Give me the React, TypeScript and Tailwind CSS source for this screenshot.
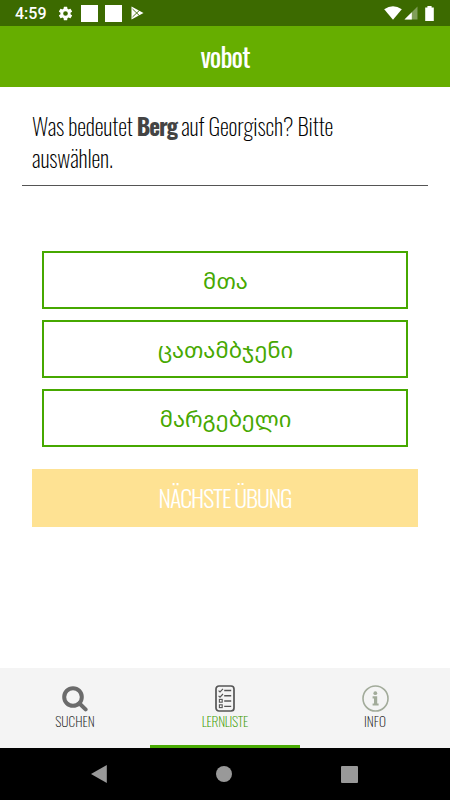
import { IoSettingsSharp } from "react-icons/io5";
import type { ReactNode } from "react";

const answers = ["მთა", "ცათამბჯენი", "მარგებელი"];

function StatusBar() {
  return (
    <div className="flex h-[26px] items-center bg-[#3c6a00] pl-[15px] pr-4 text-white">
      <span className="w-[42px] font-['Roboto',sans-serif] text-[16px] font-medium leading-[26px] pt-0.5">
        4:59
      </span>
      <IoSettingsSharp className="ml-[1px] size-[15px]" />
      <span className="ml-2 size-[17px] bg-white" />
      <span className="ml-[7px] size-[17px] bg-white" />
      <svg className="ml-[9px] h-[14px] w-[13px]" viewBox="0 0 13 14">
        <path d="M0.5 0.5 L12.5 7 L0.5 13.5 Z" fill="#fff" />
        <path d="M1.5 3 L8.8 10 M1.5 11 L8.8 4" stroke="#3c6a00" strokeWidth="0.9" />
      </svg>
      <div className="ml-auto flex items-center">
        <svg className="h-[14px] w-[18px]" viewBox="0 0 18 14">
          <path d="M0.2 3.3 Q9 -3 17.8 3.3 L9 13.8 Z" fill="#fff" />
        </svg>
        <svg className="ml-[2px] h-[14px] w-[14px]" viewBox="0 0 14 14">
          <path d="M13.5 0.5 V13.5 H0.5 Z" fill="#fff" opacity="0.35" />
          <path d="M7.8 6.2 V13.5 H0.5 Z" fill="#fff" />
        </svg>
        <svg className="ml-[7px] h-[15px] w-[9px]" viewBox="0 0 9 15">
          <path d="M0.2 1.4 H2.4 V0 H6.6 V1.4 H8.8 V15 H0.2 Z" fill="#fff" />
        </svg>
      </div>
    </div>
  );
}

function SearchIcon() {
  return (
    <svg className="size-[26px]" viewBox="0 0 26 26" fill="none" stroke="#6b6b6b">
      <circle cx="11" cy="11" r="8.8" strokeWidth="4" />
      <path d="M17.5 17.5 L23.6 23.4" strokeWidth="4" strokeLinecap="round" />
    </svg>
  );
}

function ListIcon() {
  return (
    <svg className="h-[27px] w-5" viewBox="0 0 20 27" fill="none" stroke="#555">
      <rect x="1" y="1" width="18" height="25" rx="3" strokeWidth="1.7" />
      <path d="M3.6 5.6 L5 7 L8 3.8 M3.6 10.8 L5 12.2 L8 9" strokeWidth="1.1" />
      <rect x="4.4" y="14.4" width="2.8" height="2.8" strokeWidth="1.1" />
      <rect x="4.4" y="19.8" width="2.8" height="2.8" strokeWidth="1.1" />
      <path d="M9.2 5.5 H16.2 M9.2 10.7 H16.2 M9.2 16 H16.2 M9.2 21.4 H16.2" strokeWidth="1.4" />
    </svg>
  );
}

function InfoIcon() {
  return (
    <svg className="size-[27px]" viewBox="0 0 27 27">
      <circle cx="13.5" cy="13.5" r="12.5" fill="none" stroke="#a2ab9a" strokeWidth="1.6" />
      <circle cx="13.3" cy="8.2" r="1.9" fill="#a2ab9a" />
      <path
        d="M10.6 11.2 H15.2 V18.4 H16.6 V20.6 H10.6 V18.4 H12 V13.4 H10.6 Z"
        fill="#a2ab9a"
      />
    </svg>
  );
}

interface TabProps {
  icon: ReactNode;
  label: string;
  active?: boolean;
}

function Tab({ icon, label, active }: TabProps) {
  return (
    <div
      className={`flex flex-1 flex-col items-center border-b-[3px] pt-[17px] ${
        active ? "border-[#4aab04]" : "border-[#f4f4f4]"
      }`}
    >
      <div className="flex h-[27px] items-center">{icon}</div>
      <span
        className={`text-[13.5px] font-extralight leading-[18px] ${
          active ? "tracking-[-0.3px] text-[#3a9a00]" : "text-[#222]"
        }`}
      >
        {label}
      </span>
    </div>
  );
}

export default function App() {
  return (
    <div className="flex h-[800px] w-[450px] flex-col overflow-hidden bg-white font-['Oswald','Open_Sans',sans-serif]">
      <StatusBar />
      <header className="flex h-[61px] items-center justify-center bg-[#66ae00] text-[27px] font-normal tracking-[-0.9px] text-white">
        vobot
      </header>

      <main className="flex-1">
        <p className="mx-[22px] h-[99px] border-b border-[#555] px-2.5 pt-[23px] text-[23px] font-extralight leading-8 tracking-[-0.15px] text-black">
          Was bedeutet <b className="font-bold tracking-[-1.1px] text-[#444]">Berg</b> auf
          Georgisch? Bitte
          <br />
          auswählen.
        </p>

        <div className="mx-[42px] mt-[65px] flex flex-col gap-[11px]">
          {answers.map((answer) => (
            <button
              key={answer}
              className="h-[58px] border-2 border-[#46a800] pl-px font-['Noto_Sans_Georgian','DejaVu_Sans',sans-serif] text-[22px] text-[#46a800]"
            >
              {answer}
            </button>
          ))}
        </div>

        <button className="ml-8 mt-[22px] h-[58px] w-[386px] bg-[#fee293] pb-[3px] text-[24px] font-light tracking-[-1.1px] text-white">
          NÄCHSTE ÜBUNG
        </button>
      </main>

      <nav className="flex h-20 bg-[#f4f4f4]">
        <Tab icon={<SearchIcon />} label="SUCHEN" />
        <Tab icon={<ListIcon />} label="LERNLISTE" active />
        <Tab icon={<InfoIcon />} label="INFO" />
      </nav>

      <div className="flex h-[52px] items-center justify-between bg-black pl-[91px] pr-[92px]">
        <svg className="h-[18px] w-4" viewBox="0 0 16 18">
          <path d="M0 9 L15.8 0 V18 Z" fill="#999" />
        </svg>
        <span className="size-4 rounded-full bg-[#999]" />
        <span className="size-[17px] rounded-[1px] bg-[#999]" />
      </div>
    </div>
  );
}
